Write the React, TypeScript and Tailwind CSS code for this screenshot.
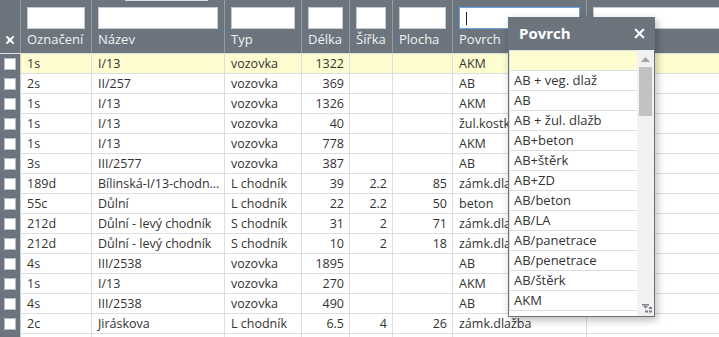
import React from "react";
import { X } from "lucide-react";

type Row = {
  id: string;
  name: string;
  type: string;
  len: string;
  width: string;
  area: string;
  surface: string;
};

const rows: Row[] = [
  { id: "1s", name: "I/13", type: "vozovka", len: "1322", width: "", area: "", surface: "AKM" },
  { id: "2s", name: "II/257", type: "vozovka", len: "369", width: "", area: "", surface: "AB" },
  { id: "1s", name: "I/13", type: "vozovka", len: "1326", width: "", area: "", surface: "AKM" },
  { id: "1s", name: "I/13", type: "vozovka", len: "40", width: "", area: "", surface: "žul.kostka" },
  { id: "1s", name: "I/13", type: "vozovka", len: "778", width: "", area: "", surface: "AKM" },
  { id: "3s", name: "III/2577", type: "vozovka", len: "387", width: "", area: "", surface: "AB" },
  { id: "189d", name: "Bílinská-I/13-chodník levý", type: "L chodník", len: "39", width: "2.2", area: "85", surface: "zámk.dlažba" },
  { id: "55c", name: "Důlní", type: "L chodník", len: "22", width: "2.2", area: "50", surface: "beton" },
  { id: "212d", name: "Důlní - levý chodník", type: "S chodník", len: "31", width: "2", area: "71", surface: "zámk.dlažba" },
  { id: "212d", name: "Důlní - levý chodník", type: "S chodník", len: "10", width: "2", area: "18", surface: "zámk.dlažba" },
  { id: "4s", name: "III/2538", type: "vozovka", len: "1895", width: "", area: "", surface: "AB" },
  { id: "1s", name: "I/13", type: "vozovka", len: "270", width: "", area: "", surface: "AKM" },
  { id: "4s", name: "III/2538", type: "vozovka", len: "490", width: "", area: "", surface: "AB" },
  { id: "2c", name: "Jiráskova", type: "L chodník", len: "6.5", width: "4", area: "26", surface: "zámk.dlažba" },
  // last row only peeks in at the bottom edge
  { id: "", name: "", type: "", len: "", width: "", area: "", surface: "" },
];

const options = [
  "",
  "AB + veg. dlaž",
  "AB",
  "AB + žul. dlažb",
  "AB+beton",
  "AB+štěrk",
  "AB+ZD",
  "AB/beton",
  "AB/LA",
  "AB/panetrace",
  "AB/penetrace",
  "AB/štěrk",
  "AKM",
];

const HeadCell = ({ w, label, focused }: { w: string; label: string; focused?: boolean }) => (
  <div className={`${w} shrink-0 flex flex-col border-r border-[#959ca3] px-[6px]`}>
    <div
      className={`mt-[7px] h-[22px] bg-white border ${
        focused ? "border-[#6aa5e0]" : "border-[#c5cad0]"
      } flex items-center`}
    >
      {focused && <div className="ml-[6px] w-px h-[13px] bg-[#222]" />}
    </div>
    <div className="h-[20px] leading-[20px] text-[13px] text-[#f2f3f4] whitespace-nowrap">{label}</div>
  </div>
);

const Cell = ({ w, children, right }: { w: string; children?: React.ReactNode; right?: boolean }) => (
  <div
    className={`${w} shrink-0 border-r border-[#dcdee3] truncate ${
      right ? "text-right pr-[5px] pl-[2px]" : "pl-[6px] pr-[2px]"
    }`}
  >
    {children}
  </div>
);

export default function App() {
  return (
    <div className="relative w-[719px] h-[337px] overflow-hidden bg-white font-['Open_Sans',sans-serif] text-[12.5px] text-[#333]">
      {/* header */}
      <div className="flex h-[54px] bg-[#6c757d] border-b border-[#dcdee3]">
        <div className="w-[21px] shrink-0 border-r border-[#959ca3] flex justify-center pt-[34px]">
          <X size={12} strokeWidth={4} className="text-white" />
        </div>
        <HeadCell w="w-[71px]" label="Označení" />
        <HeadCell w="w-[133px]" label="Název" />
        <HeadCell w="w-[77px]" label="Typ" />
        <HeadCell w="w-[48px]" label="Délka" />
        <HeadCell w="w-[43px]" label="Šířka" />
        <HeadCell w="w-[60px]" label="Plocha" />
        <HeadCell w="w-[134px]" label="Povrch" focused />
        <div className="flex-1 pl-[6px]">
          <div className="mt-[7px] h-[22px] w-[160px] bg-white border border-[#c5cad0]" />
        </div>
      </div>

      {/* rows */}
      <div className="flex flex-col">
        {rows.map((r, i) => (
          <div
            key={i}
            className={`flex h-[20px] leading-[19px] border-b border-[#dcdee3] ${
              i === 0 ? "bg-[#fdfdcf]" : "bg-white"
            }`}
          >
            <div className="w-[21px] shrink-0 bg-[#6c757d] border-r border-[#c9ccd1] flex items-center pl-[4px] -mb-px">
              <div className="w-[12px] h-[12px] bg-white border border-[#b9bec4]" />
            </div>
            <Cell w="w-[71px]">{r.id}</Cell>
            <Cell w="w-[133px]">{r.name}</Cell>
            <Cell w="w-[77px]">{r.type}</Cell>
            <Cell w="w-[48px]" right>{r.len}</Cell>
            <Cell w="w-[43px]" right>{r.width}</Cell>
            <Cell w="w-[60px]" right>{r.area}</Cell>
            <Cell w="w-[134px]">{r.surface}</Cell>
            <div className="flex-1" />
          </div>
        ))}
      </div>

      {/* thin strip at the very top */}
      <div className="absolute top-0 left-[125px] w-[83px] h-px bg-[#d9dce0]" />

      {/* Povrch dropdown */}
      <div className="absolute left-[508px] top-[17px] w-[147px] bg-[#6c757d] shadow-[2px_3px_8px_rgba(0,0,0,0.28)]">
        <div className="h-[33px] flex items-center justify-between pl-[11px] pr-[8px]">
          <span className="text-[15px] font-bold text-white">Povrch</span>
          <X size={15} strokeWidth={3.5} className="text-white" />
        </div>
        <div className="mx-px mb-px h-[266px] flex bg-white overflow-hidden">
          <div className="w-[128px] border-t border-[#dcdee3] flex flex-col">
            {options.map((o, i) => (
              <div
                key={i}
                className={`h-[20px] shrink-0 leading-[19px] pl-[4px] border-l border-b border-[#dcdee3] text-[13px] text-[#333] ${
                  i === 0 ? "bg-[#fdfdcf]" : "bg-white"
                }`}
              >
                {o}
              </div>
            ))}
          </div>
          <div className="w-[17px] bg-[#f1f1f1] flex flex-col items-center">
            <svg width="9" height="5" viewBox="0 0 9 5" className="mt-[7px]">
              <polygon points="0,5 4.5,0 9,5" fill="#a3a3a3" />
            </svg>
            <div className="mt-[5px] w-[13px] h-[49px] bg-[#c1c1c1]" />
            <div className="flex-1" />
            <svg width="11" height="9" viewBox="0 0 11 9" className="mb-[3px] ml-[3px]">
              <rect x="0" y="0" width="7" height="1.5" fill="#7a7f85" />
              <polygon points="1,2 6,2 3.5,4.5" fill="#7a7f85" />
              <rect x="7" y="3" width="3" height="2" fill="#7a7f85" />
              <rect x="3" y="6.5" width="3" height="2" fill="#7a7f85" />
              <rect x="7" y="6.5" width="3" height="2" fill="#7a7f85" />
            </svg>
          </div>
        </div>
      </div>
    </div>
  );
}
